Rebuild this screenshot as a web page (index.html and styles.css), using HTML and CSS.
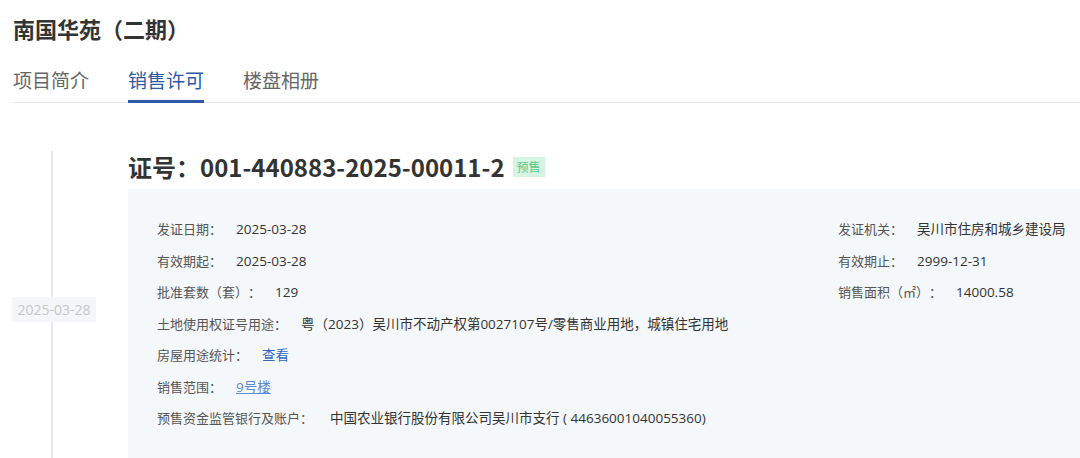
FILE: index.html
```html
<!DOCTYPE html>
<html lang="zh-CN">
<head>
	<title>南国华苑（二期）</title>
	<meta charset="utf-8">
	<meta name="viewport" content="width=device-width, initial-scale=1">

	<link rel="stylesheet" href="styles.css">
</head>
<body>

	<h1 class="title">南国华苑（二期）</h1>

	<nav class="tabs">
		<a class="tab">项目简介</a>
		<a class="tab active">销售许可</a>
		<a class="tab">楼盘相册</a>
	</nav>

	<div class="timeline">
		<div class="item">
			<div class="item-aside">
				<span class="item-date">2025-03-28</span>
			</div>
			<div class="item-body">
				<h2 class="permit-no">证号：001-440883-2025-00011-2 <span class="badge">预售</span></h2>
				<div class="card">
					<div class="field"><span class="label">发证日期：</span><span class="value">2025-03-28</span></div>
					<div class="field"><span class="label">发证机关：</span><span class="value">吴川市住房和城乡建设局</span></div>
					<div class="field"><span class="label">有效期起：</span><span class="value">2025-03-28</span></div>
					<div class="field"><span class="label">有效期止：</span><span class="value">2999-12-31</span></div>
					<div class="field"><span class="label">批准套数（套）：</span><span class="value">129</span></div>
					<div class="field"><span class="label">销售面积（㎡）：</span><span class="value">14000.58</span></div>
					<div class="field wide"><span class="label">土地使用权证号用途：</span><span class="value">粤（2023）吴川市不动产权第0027107号/零售商业用地，城镇住宅用地</span></div>
					<div class="field wide"><span class="label">房屋用途统计：</span><a class="value link">查看</a></div>
					<div class="field wide"><span class="label">销售范围：</span><a class="value link-under">9号楼</a></div>
					<div class="field wide"><span class="label">预售资金监管银行及账户：</span><span class="value value-far">中国农业银行股份有限公司吴川市支行 ( 44636001040055360)</span></div>
				</div>
			</div>
		</div>
	</div>

</body>
</html>
```

FILE: styles.css
```css
*,
*:before,
*:after {
	box-sizing: border-box;
}

body {
	margin: 0;
	background-color: #ffffff;
	color: #333333;
	font-family: "Noto Sans CJK SC", sans-serif;
	text-spacing-trim: space-all;
	overflow: hidden;
}

.title {
	margin: 0;
	padding: 13px 0 0 13px;
	font-size: 22px;
	line-height: 30px;
	font-weight: bold;
	color: #333333;
}

.tabs {
	display: flex;
	gap: 39px;
	margin: 24px 0 0 13px;
	border-bottom: 1px solid #e6e6e6;
}

.tab {
	margin-bottom: -1px;
	padding-bottom: 7px;
	border-bottom: 3px solid transparent;
	font-size: 19px;
	line-height: 26px;
	color: #666666;
}

.tab.active {
	color: #2c5aa6;
	border-bottom-color: #2c5aa6;
}

.timeline {
	margin-top: 48px;
}

.item {
	display: flex;
}

.item-aside {
	display: flex;
	align-items: center;
	flex: 0 0 128px;
	background: linear-gradient(#e9e9e9, #e9e9e9) no-repeat 51px 0 / 2px 100%;
}

.item-date {
	width: 84px;
	margin-left: 12px;
	background-color: #f4f6f9;
	color: #c4c7cc;
	font-family: "Open Sans", "Noto Sans CJK SC", sans-serif;
	font-size: 14px;
	line-height: 25px;
	text-align: center;
}

.item-body {
	flex: 1;
}

.permit-no {
	display: flex;
	align-items: center;
	gap: 8px;
	margin: 0 0 6px;
	font-size: 24px;
	line-height: 32px;
	font-weight: bold;
	color: #333333;
}

.badge {
	width: 32px;
	height: 20px;
	background-color: #d5f4e2;
	color: #5cc78c;
	font-size: 12px;
	font-weight: normal;
	line-height: 20px;
	text-align: center;
}

.card {
	display: grid;
	grid-template-columns: 681px 1fr;
	padding: 24px 0 34px 29px;
	background-color: #f5f8fb;
	font-size: 13px;
	line-height: 31.5px;
}

.field {
	display: flex;
	align-items: baseline;
	white-space: nowrap;
}

.field.wide {
	grid-column: 1 / -1;
}

.label {
	color: #555555;
	margin-right: 14px;
}

.value {
	color: #333333;
	font-family: "Open Sans", "Noto Sans CJK SC", sans-serif;
	font-size: 13.5px;
	line-height: 20px;
}

.value-far {
	margin-left: 3px;
}

.link {
	color: #3467c4;
}

.link-under {
	color: #5a8ad6;
	text-decoration: underline;
}
```
